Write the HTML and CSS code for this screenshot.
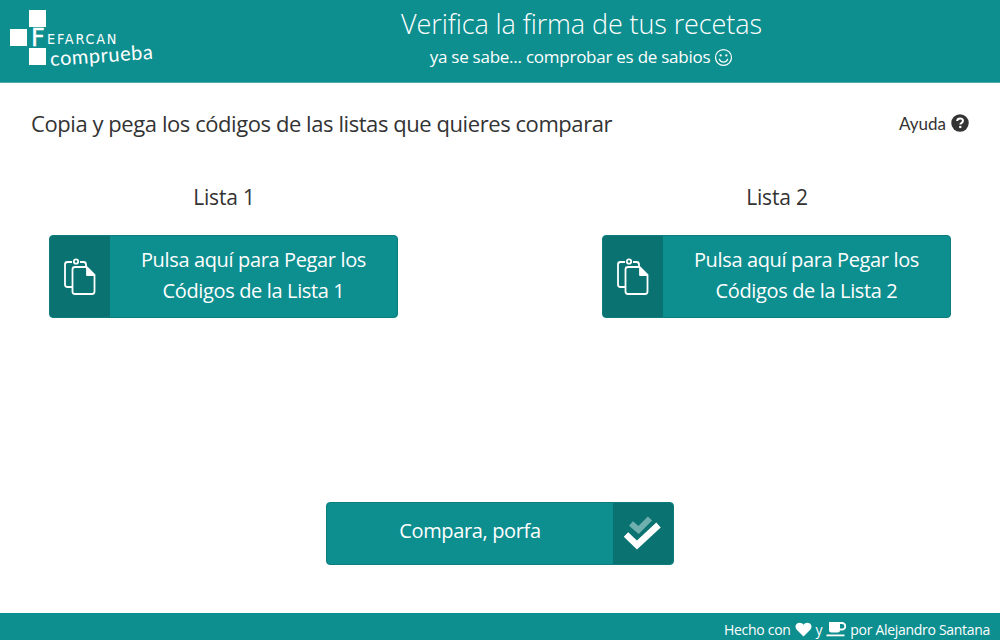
FILE: index.html
```html
<!DOCTYPE html>
<html lang="es">
<head>
<meta charset="utf-8">
<title>Fefarcan comprueba</title>
<link rel="stylesheet" href="styles.css">
</head>
<body>
<div class="page">
  <header class="header">
    <div class="logo">
      <span class="sq sq-top"></span>
      <span class="sq sq-left"></span>
      <span class="sq sq-bottom"></span>
      <span class="logo-f">F</span>
      <span class="logo-name">EFARCAN</span>
      <span class="logo-sub">comprueba</span>
    </div>
    <div class="titles">
      <div class="title">Verifica la firma de tus recetas</div>
      <div class="subtitle">ya se sabe... comprobar es de sabios
        <svg class="smile" viewBox="0 0 20 20" width="19" height="19" aria-hidden="true"><circle cx="10" cy="10" r="8.4" fill="none" stroke="#fff" stroke-width="1.3"/><circle cx="7" cy="7.8" r="1.2" fill="#fff"/><circle cx="13" cy="7.8" r="1.2" fill="#fff"/><path d="M5.6 11.8c1 2 2.6 3 4.4 3s3.400-1 4.400-3" fill="none" stroke="#fff" stroke-width="1.300" stroke-linecap="round"/></svg>
      </div>
    </div>
  </header>

  <main class="main">
    <div class="intro">
      <h1 class="lead">Copia y pega los códigos de las listas que quieres comparar</h1>
      <div class="help">Ayuda
        <svg viewBox="0 0 20 20" width="18" height="18" aria-hidden="true"><circle cx="10" cy="10" r="9.700" fill="#333"/><path d="M6.800 7.800c.2-1.900 1.600-2.900 3.300-2.900 1.800 0 3.200 1.100 3.200 2.700 0 1.400-.9 2-1.700 2.500-.8.500-1.200.8-1.200 1.700" fill="none" stroke="#fff" stroke-width="2.200"/><rect x="9.100" y="13.200" width="2.400" height="2.400" fill="#fff"/></svg>
      </div>
    </div>

    <div class="lists">
      <section class="list">
        <h2 class="list-title">Lista 1</h2>
        <button class="paste" type="button">
          <span class="paste-icon">
            <svg viewBox="0 0 34 38" width="34" height="38" fill="none" stroke="#fff" stroke-width="1.800" stroke-linejoin="round" aria-hidden="true"><path d="M9 29H4.500A2.500 2.500 0 0 1 2 26.500V6.500A2.500 2.500 0 0 1 4.500 4H9"/><path d="M17 4h3.500A2.500 2.500 0 0 1 23 6.500V9"/><circle cx="13" cy="3.500" r="2.200"/><path d="M12 9h11.500l8 8v16.500a2.500 2.500 0 0 1-2.500 2.500H12a2.500 2.500 0 0 1-2.500-2.500v-22A2.500 2.500 0 0 1 12 9z"/><path d="M24 9.500V17h7" fill="#fff"/></svg>
          </span>
          <span class="paste-text">Pulsa aquí para Pegar los<br>Códigos de la Lista 1</span>
        </button>
      </section>
      <section class="list">
        <h2 class="list-title">Lista 2</h2>
        <button class="paste" type="button">
          <span class="paste-icon">
            <svg viewBox="0 0 34 38" width="34" height="38" fill="none" stroke="#fff" stroke-width="1.800" stroke-linejoin="round" aria-hidden="true"><path d="M9 29H4.500A2.500 2.500 0 0 1 2 26.500V6.500A2.500 2.500 0 0 1 4.500 4H9"/><path d="M17 4h3.500A2.500 2.500 0 0 1 23 6.500V9"/><circle cx="13" cy="3.500" r="2.200"/><path d="M12 9h11.500l8 8v16.500a2.500 2.500 0 0 1-2.500 2.500H12a2.500 2.500 0 0 1-2.500-2.500v-22A2.500 2.500 0 0 1 12 9z"/><path d="M24 9.500V17h7" fill="#fff"/></svg>
          </span>
          <span class="paste-text">Pulsa aquí para Pegar los<br>Códigos de la Lista 2</span>
        </button>
      </section>
    </div>

    <div class="compare-row">
      <button class="compare" type="button">
        <span class="compare-text">Compara, porfa</span>
        <span class="compare-icon">
          <svg viewBox="0 0 38 38" width="38" height="38" fill="none" aria-hidden="true"><path d="M7 8.500l7.500 6.500L26 3.500" stroke="#6fb0ae" stroke-width="6"/><path d="M2 19.500l11 10.500L34.500 10" stroke="#fff" stroke-width="6.500"/></svg>
        </span>
      </button>
    </div>
  </main>

  <footer class="footer">
    <span>Hecho con</span>
    <svg viewBox="0 0 18 16" width="17" height="15" aria-hidden="true"><path d="M9 15.500 1.800 8.300C-.3 6.200.2 2.800 2.500 1.400 4.700.1 7.500.7 9 2.800 10.500.7 13.300.1 15.500 1.400c2.300 1.400 2.800 4.800.7 6.900z" fill="#fff"/></svg>
    <span>y</span>
    <svg viewBox="0 0 20 16" width="20" height="16" aria-hidden="true"><path d="M3 1h11v8a2.500 2.500 0 0 1-2.500 2.500h-6A2.500 2.500 0 0 1 3 9z" fill="#fff"/><path d="M14 2h2a2.600 2.600 0 0 1 0 6.500h-2" fill="none" stroke="#fff" stroke-width="1.800"/><rect x="0.500" y="13.500" width="18" height="1.800" fill="#fff"/></svg>
    <span>por Alejandro Santana</span>
  </footer>
</div>
</body>
</html>
```
FILE: styles.css
```css
* { box-sizing: border-box; }
html, body { margin: 0; padding: 0; height: 100%; background: #fff; }
body { font-family: "Open Sans", "Noto Sans", sans-serif; color: #333; }

.page { height: 640px; display: flex; flex-direction: column; }

.header {
  height: 83px;
  flex: none;
  background: #0d8e8f;
  border-bottom: 1px solid #4fabac;
  display: flex;
  color: #fff;
}
.logo { position: relative; width: 163px; flex: none; }
.sq { position: absolute; width: 17px; height: 17px; background: #fff; }
.sq-top { left: 29px; top: 10px; }
.sq-left { left: 10px; top: 29px; }
.sq-bottom { left: 29px; top: 48px; }
.logo-f { position: absolute; left: 31px; top: 24px; font: 400 24px/28px "DejaVu Sans", sans-serif; -webkit-text-stroke: .4px #fff; }
.logo-name { position: absolute; left: 47px; top: 30px; font: 400 14px/18px "DejaVu Sans", sans-serif; letter-spacing: 1.900px; transform: scaleX(.92); transform-origin: left center; }
.logo-sub { position: absolute; left: 50px; top: 46px; font: 400 20px/24px "Lato", sans-serif; transform: rotate(-4deg); transform-origin: left center; letter-spacing: .55px; }

.titles { flex: 1; text-align: center; font-family: "Open Sans", sans-serif; }
.title { font-size: 27px; font-weight: 300; line-height: 34px; margin-top: 7px; letter-spacing: -.1px; }
.subtitle { font-size: 17px; line-height: 24px; margin-top: 4px; display: flex; justify-content: center; align-items: center; gap: 4px; letter-spacing: -.25px; }

.main { flex: 1; display: flex; flex-direction: column; }

.intro { display: flex; justify-content: space-between; align-items: center; padding: 24px 31px 0; }
.lead { margin: 0; font-size: 22px; font-weight: 400; line-height: 32px; letter-spacing: -.43px; }
.help { display: flex; align-items: center; gap: 5px; font-size: 17px; font-family: "Lato", sans-serif; }

.lists { display: flex; justify-content: space-between; padding: 0 49px; margin-top: 41px; }
.list { width: 349px; }
.list-title { margin: 0 0 21px; height: 34px; font-size: 21px; line-height: 34px; font-weight: 400; text-align: center; letter-spacing: -.2px; padding-left: 1px; }

.paste {
  display: flex;
  width: 100%;
  height: 83px;
  padding: 0;
  border: 1px solid #0c7c7d;
  border-radius: 4px;
  background: #0d8e8f;
  color: #fff;
  font: inherit;
  overflow: hidden;
}
.paste-icon { width: 60px; flex: none; background: #0b7272; display: flex; align-items: center; justify-content: center; }
.paste-text { flex: 1; font-size: 20px; line-height: 31px; letter-spacing: -.36px; align-self: center; text-align: center; padding-bottom: 4px; font-weight: 500; }

.compare-row { display: flex; justify-content: center; margin-top: 184px; }
.compare {
  display: flex;
  width: 348px;
  height: 63px;
  padding: 0;
  border: 1px solid #0c7c7d;
  border-radius: 4px;
  background: #0d8e8f;
  color: #fff;
  font: inherit;
  overflow: hidden;
}
.compare-text { flex: 1; font-size: 20px; line-height: 56px; letter-spacing: -.36px; text-align: center; font-weight: 500; }
.compare-icon { width: 60px; flex: none; background: #0b7272; display: flex; align-items: center; justify-content: center; }

.footer {
  height: 27px;
  flex: none;
  background: #0d8e8f;
  color: #fff;
  font-size: 14px;
  font-weight: 500;
  letter-spacing: -.3px;
  display: flex;
  align-items: center;
  justify-content: flex-end;
  gap: 4px;
  padding: 5px 10px 0 0;
}
```
